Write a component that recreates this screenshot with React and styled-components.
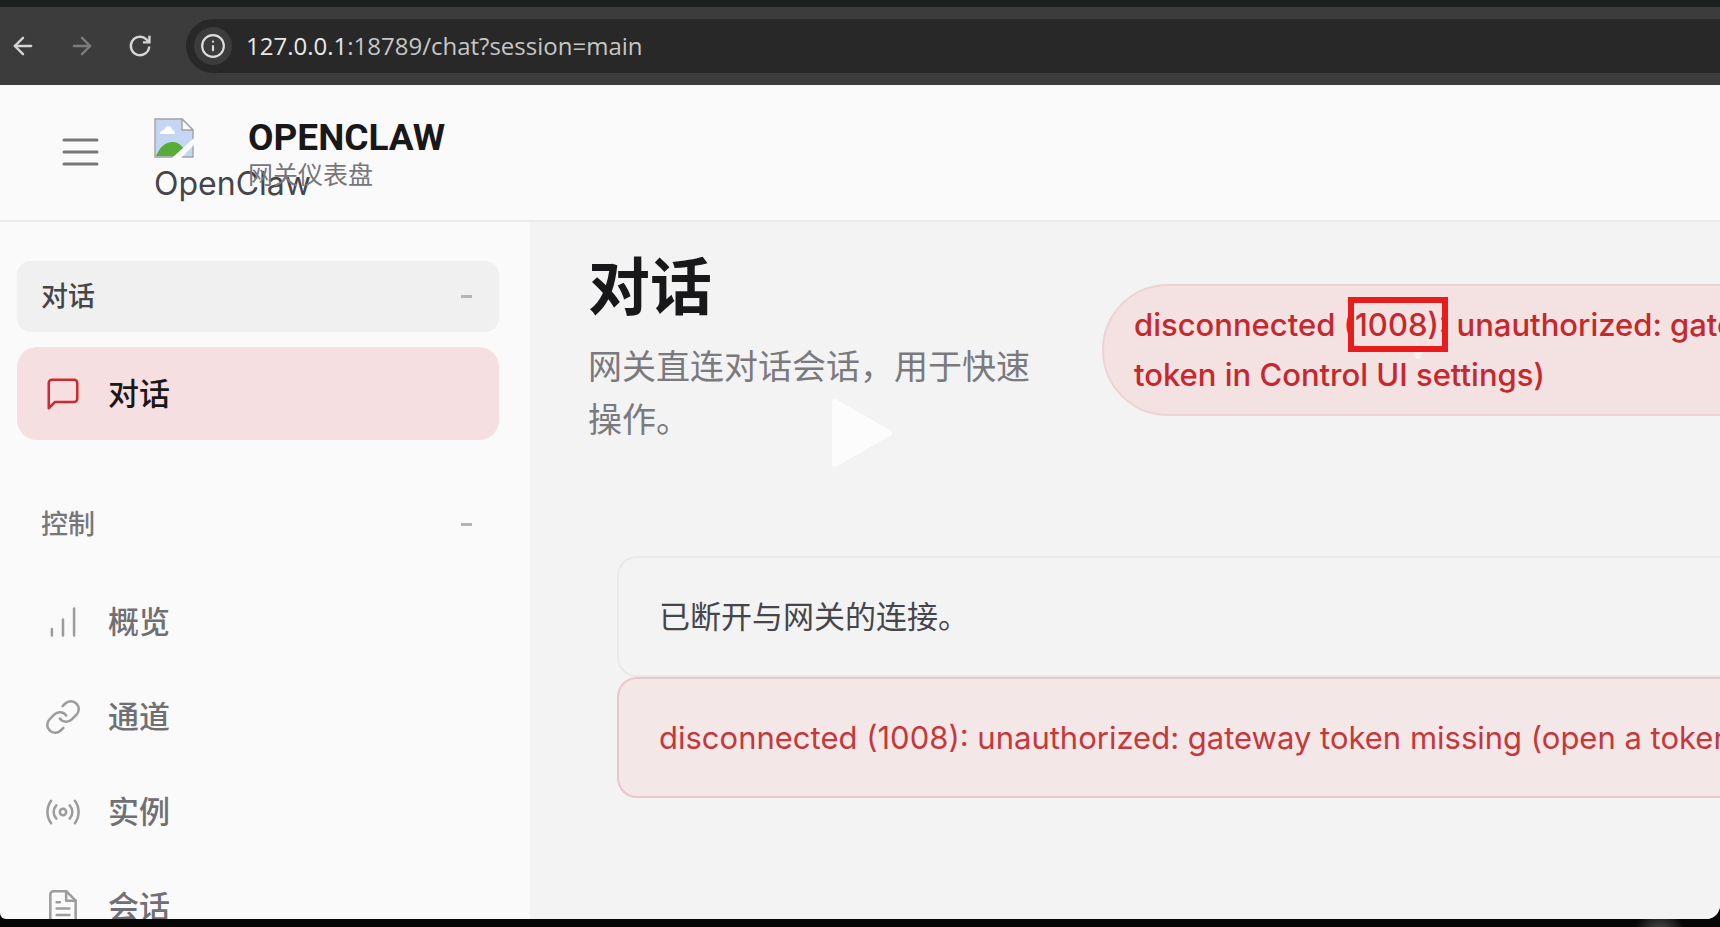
import React, { useState } from "react";
import styled, { createGlobalStyle } from "styled-components";
import { ArrowLeft, ArrowRight, Info, Link } from "lucide-react";

const GlobalStyle = createGlobalStyle`
  * {
    box-sizing: border-box;
  }
  body {
    margin: 0;
    background: #060606;
    font-family: Inter, "Noto Sans CJK SC", sans-serif;
  }
  button {
    border: none;
    background: transparent;
    font-family: inherit;
    padding: 0;
    cursor: pointer;
  }
`;

const ReloadIcon = () => (
  <svg width="26" height="26" viewBox="0 0 24 24" fill="none" stroke="currentColor" strokeWidth="2.2">
    <path d="M20.5 12.5a8.5 8.5 0 1 1-2.6-6.6L20.5 8.4" />
    <path d="M20.7 2.6v6h-6" />
  </svg>
);

const MenuIcon = () => (
  <svg width="48" height="48" viewBox="0 0 48 48" fill="none" stroke="currentColor" strokeWidth="3" strokeLinecap="round">
    <path d="M8 11h33M8 23h33M8 35h33" />
  </svg>
);

const BrokenImageIcon = () => (
  <svg width="40" height="40" viewBox="0 0 40 40">
    <path d="M1 1h27l11 11v27H1z" fill="#c5d6f5" stroke="#a3a3a3" strokeWidth="1.4" />
    <path d="M28 1v11h11z" fill="#fafafa" stroke="#a3a3a3" strokeWidth="1.4" />
    <path d="M6 16c0-3 2-4 4-4 1-3 3-4 4-4 3 0 4 2 4 4 2 0 3 2 3 4z" fill="#fff" />
    <path d="M2 38c4-9 9-14 17-14 5 0 8 3 11 7l-7 7z" fill="#58ad38" />
    <path d="M18 40 40 20v7L27 40z" fill="#fafafa" />
  </svg>
);

const ChatIcon = () => (
  <NavSvg viewBox="0 0 24 24">
    <path d="M21 15a2 2 0 0 1-2 2H7l-4 4V5a2 2 0 0 1 2-2h14a2 2 0 0 1 2 2z" />
  </NavSvg>
);

const BarsIcon = () => (
  <NavSvg viewBox="0 0 24 24">
    <path d="M12 20.500V10.500M19 20.500V3.500M5 20.500v-4" />
  </NavSvg>
);

const RadioIcon = () => (
  <NavSvg viewBox="0 0 24 24">
    <circle cx="12" cy="12" r="2" />
    <path d="M16.2 7.800a6 6 0 0 1 0 8.400M7.800 16.200a6 6 0 0 1 0-8.400M19.500 4.900a12 12 0 0 1 0 14.200M4.500 19.100a12 12 0 0 1 0-14.200" />
  </NavSvg>
);

const FileIcon = () => (
  <NavSvg viewBox="0 0 24 24">
    <path d="M14 2H6a2 2 0 0 0-2 2v16a2 2 0 0 0 2 2h12a2 2 0 0 0 2-2V8z" />
    <path d="M14 2v6h6M16 13H8M16 17H8M10 9H8" />
  </NavSvg>
);

const controlItems = [
  { name: "概览", icon: <BarsIcon /> },
  { name: "通道", icon: <Link size={38} strokeWidth={1.6} /> },
  { name: "实例", icon: <RadioIcon /> },
  { name: "会话", icon: <FileIcon /> },
];

const App = () => {
  const [isNavOpen, setIsNavOpen] = useState(true);
  return (
    <Screen>
      <GlobalStyle />
      <BrowserBar>
        <BrowserButton aria-label="Back">
          <ArrowLeft size={28} />
        </BrowserButton>
        <BrowserButton aria-label="Forward" $dim>
          <ArrowRight size={28} />
        </BrowserButton>
        <BrowserButton aria-label="Reload">
          <ReloadIcon />
        </BrowserButton>
        <AddressBar>
          <SiteInfo aria-label="Site information">
            <Info size={26} />
          </SiteInfo>
          <Url>
            <b>127.0.0.1</b>:18789/chat?session=main
          </Url>
        </AddressBar>
      </BrowserBar>
      <Page>
        <TopBar>
          <MenuButton aria-label="Menu" onClick={() => setIsNavOpen(!isNavOpen)}>
            <MenuIcon />
          </MenuButton>
          <Logo>
            <BrokenImageIcon />
            <span>OpenClaw</span>
          </Logo>
          <Brand>
            <BrandTitle>OPENCLAW</BrandTitle>
            <BrandSub>网关仪表盘</BrandSub>
          </Brand>
        </TopBar>
        <Body>
          {isNavOpen && (
            <Sidebar>
              <NavGroup>
                <GroupButton $active>
                  <NavLabel>对话</NavLabel>
                  <Dash />
                </GroupButton>
                <NavItem href="#chat" $active>
                  <ChatIcon />
                  <NavLabel>对话</NavLabel>
                </NavItem>
              </NavGroup>
              <NavGroup>
                <GroupButton>
                  <NavLabel>控制</NavLabel>
                  <Dash />
                </GroupButton>
                {controlItems.map((item) => (
                  <NavItem href="#" key={item.name}>
                    {item.icon}
                    <NavLabel>{item.name}</NavLabel>
                  </NavItem>
                ))}
              </NavGroup>
            </Sidebar>
          )}
          <Content>
            <ContentHeader>
              <Heading>
                <Title>对话</Title>
                <Subtitle>网关直连对话会话，用于快速操作。</Subtitle>
              </Heading>
              <StatusPill>
                disconnected{" "}
                <Marked>
                  (1008):
                  <Pointer viewBox="0 0 12 18">
                    <path d="M4 0l2 1 1 4 3 1v4l-2 6H4L2 11l1-2z" />
                  </Pointer>
                </Marked>{" "}
                unauthorized: gateway token missing (open a tokenized dashboard
                URL or paste
                <br />
                token in Control UI settings)
              </StatusPill>
            </ContentHeader>
            <Messages>
              <Callout>已断开与网关的连接。</Callout>
              <Callout $danger>
                disconnected (1008): unauthorized: gateway token missing (open a
                tokenized dashboard URL or paste token in Control UI settings)
              </Callout>
            </Messages>
          </Content>
        </Body>
      </Page>
      <PlayButton aria-label="Play">
        <svg width="64" height="72" viewBox="0 0 64 72">
          <path d="M5 5v62L59 36z" fill="#fcfcfc" stroke="#fcfcfc" strokeWidth="6" strokeLinejoin="round" />
        </svg>
      </PlayButton>
    </Screen>
  );
};

const Screen = styled.div`
  position: relative;
  height: 100vh;
  display: flex;
  flex-direction: column;
  overflow: hidden;
  padding-bottom: 8px;
  background: radial-gradient(circle at 96.5% 100.8%, #555 0, #060606 26px);
`;

const BrowserBar = styled.div`
  flex: none;
  display: flex;
  align-items: center;
  height: 85px;
  padding: 11px 0 12px 9px;
  border-top: 7px solid #1e1f1f;
  background: #3c3c3c;
`;
const BrowserButton = styled.button`
  width: 59px;
  height: 48px;
  display: flex;
  align-items: center;
  color: ${({ $dim }) => ($dim ? "#7c7c7c" : "#d6d6d6")};
`;
const AddressBar = styled.div`
  flex: 1;
  display: flex;
  align-items: center;
  gap: 14px;
  height: 54px;
  padding-left: 8px;
  border-radius: 27px 0 0 27px;
  background: #282828;
`;
const SiteInfo = styled.button`
  width: 38px;
  height: 38px;
  display: flex;
  align-items: center;
  justify-content: center;
  border-radius: 50%;
  background: #3c3c3c;
  color: #dcdcdc;
`;
const Url = styled.span`
  font-family: "Open Sans", sans-serif;
  font-size: 24px;
  line-height: 34px;
  color: #c6c6c6;
  b {
    font-weight: 400;
    color: #e8e8e8;
  }
`;

const Page = styled.div`
  flex: 1;
  min-height: 0;
  display: flex;
  flex-direction: column;
  overflow: hidden;
  border-radius: 0 0 14px 6px;
  background: #fafafa;
`;
const TopBar = styled.header`
  flex: none;
  display: flex;
  align-items: center;
  height: 137px;
  padding-left: 56px;
  border-bottom: 2px solid #ebebeb;
`;
const MenuButton = styled.button`
  width: 48px;
  height: 48px;
  color: #77777b;
`;
const Logo = styled.div`
  width: 74px;
  margin: 0 20px 0 50px;
  padding-top: 16px;
  font-size: 32px;
  line-height: 40px;
  color: #45454a;
  svg {
    display: block;
    margin-bottom: 6px;
  }
`;
const Brand = styled.div`
  padding-top: 2px;
`;
const BrandTitle = styled.div`
  font-family: Roboto, sans-serif;
  font-size: 37px;
  line-height: 42px;
  font-weight: 700;
  color: #18181b;
`;
const BrandSub = styled.div`
  font-size: 25px;
  line-height: 32px;
  color: #77777b;
`;

const Body = styled.div`
  flex: 1;
  min-height: 0;
  display: flex;
`;
const Sidebar = styled.nav`
  flex: none;
  display: flex;
  flex-direction: column;
  gap: 49px;
  width: 530px;
  padding: 39px 31px 0 17px;
  overflow: hidden;
  font-family: "Noto Sans CJK SC", sans-serif;
`;
const NavGroup = styled.div`
  display: flex;
  flex-direction: column;
  gap: 2px;
`;
const GroupButton = styled.button`
  display: flex;
  align-items: center;
  justify-content: space-between;
  height: 71px;
  margin-bottom: 13px;
  padding: 0 27px 0 24px;
  border-radius: 14px;
  font-size: 27px;
  font-weight: 500;
  background: ${({ $active }) => ($active ? "#f0f0f0" : "transparent")};
  color: ${({ $active }) => ($active ? "#45454a" : "#77777b")};
`;
const Dash = styled.span`
  width: 11px;
  height: 3px;
  background: #b4b4b6;
`;
const NavItem = styled.a`
  flex: none;
  display: flex;
  align-items: center;
  gap: 26px;
  height: 93px;
  padding-left: 27px;
  border-radius: 20px;
  font-size: 31px;
  font-weight: 500;
  text-decoration: none;
  background: ${({ $active }) => ($active ? "#f5dfe0" : "transparent")};
  color: ${({ $active }) => ($active ? "#18181b" : "#707074")};
  svg {
    color: ${({ $active }) => ($active ? "#cf2a30" : "#9c9c9f")};
  }
`;
const NavLabel = styled.span`
  padding-bottom: 4px;
`;
const NavSvg = styled.svg`
  width: 38px;
  height: 38px;
  fill: none;
  stroke: currentColor;
  stroke-width: 1.6;
  stroke-linecap: round;
  stroke-linejoin: round;
`;

const Content = styled.main`
  flex: 1;
  min-width: 0;
  padding: 24px 0 0 58px;
  overflow: hidden;
  background: #f3f3f3;
`;
const ContentHeader = styled.div`
  display: flex;
  align-items: flex-start;
  gap: 48px;
`;
const Heading = styled.div`
  flex: 0 0 466px;
`;
const Title = styled.h1`
  margin: 0;
  font-size: 62px;
  line-height: 84px;
  font-weight: 700;
  color: #18181b;
`;
const Subtitle = styled.p`
  margin: 10px 0 0;
  font-size: 34px;
  line-height: 53px;
  color: #7a7a7e;
`;
const StatusPill = styled.div`
  flex: none;
  margin-top: 38px;
  padding: 14px 30px;
  border: 2px solid #eed3d5;
  border-radius: 66px;
  font-size: 31px;
  line-height: 50px;
  font-weight: 500;
  white-space: nowrap;
  background: #f4e1e1;
  color: #c5282d;
`;
const Marked = styled.span`
  position: relative;
  &::after {
    content: "";
    position: absolute;
    top: -9px;
    bottom: -9px;
    left: 4px;
    right: 0;
    border: 6px solid #e81c1c;
  }
`;
// mouse pointer resting just under the marked code
const Pointer = styled.svg`
  position: absolute;
  top: 100%;
  right: 24px;
  width: 12px;
  height: 18px;
  fill: #f8f1f1;
`;
const Messages = styled.div`
  display: flex;
  flex-direction: column;
  margin: 110px 0 0 29px;
`;
const Callout = styled.div`
  padding: 34px 40px;
  border: 2px solid ${({ $danger }) => ($danger ? "#ecc6ca" : "#e9e9e9")};
  border-right: none;
  border-radius: 20px 0 0 20px;
  font-size: 31px;
  line-height: 49px;
  white-space: nowrap;
  overflow: hidden;
  background: ${({ $danger }) => ($danger ? "#f3e7e7" : "#f3f3f3")};
  color: ${({ $danger }) => ($danger ? "#c5383b" : "#45454a")};
`;

// sits over the whole screen, a little above the middle
const PlayButton = styled.button`
  position: absolute;
  top: 397px;
  left: calc(50% - 30px);
  height: 72px;
`;

export default App;
